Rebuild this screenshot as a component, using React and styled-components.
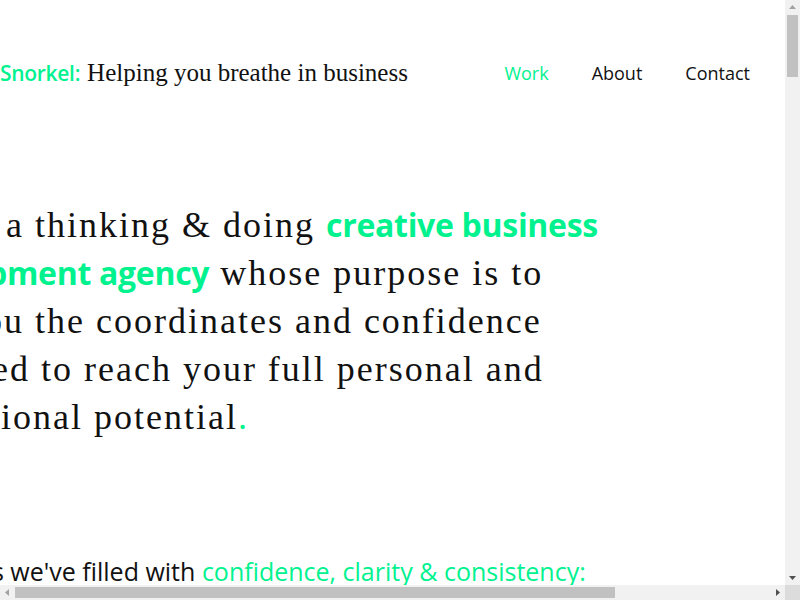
import React from "react";
import styled, { createGlobalStyle } from "styled-components";

const GREEN = "#00f28f";

const Global = createGlobalStyle`
  html, body { margin: 0; padding: 0; background: #fff; }
  body { color: #111; font-family: "Liberation Serif", serif; }
`;

const Page = styled.div`
  display: flex;
  justify-content: center;
  width: 100%;
  min-height: 5230px;
`;

const Column = styled.div`
  flex: 0 0 1206px;
  width: 1206px;
  display: flex;
  flex-direction: column;
`;

const Header = styled.header`
  height: 146px;
  display: flex;
  align-items: center;
  justify-content: space-between;
  padding: 0 35px 0 203px;
  box-sizing: border-box;
  width: 988px;
`;

const Brand = styled.div`
  display: flex;
  align-items: baseline;
  gap: 7px;
  white-space: nowrap;
`;

const BrandName = styled.span`
  font-family: "Open Sans", sans-serif;
  font-weight: 600;
  font-size: 21px;
  letter-spacing: -0.3px;
  color: ${GREEN};
`;

const Tagline = styled.span`
  font-family: "Liberation Serif", serif;
  font-size: 25px;
  color: #111;
`;

const Nav = styled.nav`
  display: flex;
  gap: 43px;
`;

const NavLink = styled.a`
  font-family: "Open Sans", sans-serif;
  font-size: 18px;
  text-decoration: none;
  color: ${(p) => (p.$active ? GREEN : "#111")};
`;

const Hero = styled.h1`
  margin: 55px 0 0 86px;
  font-family: "Liberation Serif", serif;
  font-weight: 400;
  font-size: 36px;
  line-height: 48px;
  letter-spacing: 2px;
  color: #111;
  white-space: nowrap;
`;

const Accent = styled.strong`
  font-family: "Open Sans", sans-serif;
  font-weight: 700;
  font-size: 32px;
  letter-spacing: -0.3px;
  color: ${GREEN};
`;

const Dot = styled.span`
  color: ${GREEN};
`;

const Intro = styled.p`
  margin: 114px 0 0 78px;
  font-family: "Open Sans", sans-serif;
  font-weight: 400;
  font-size: 25px;
  line-height: 32px;
  color: #111;
  white-space: nowrap;
`;

const IntroAccent = styled.span`
  color: ${GREEN};
`;

/* browser-style scrollbars drawn over the page, as in the reference */
const VScroll = styled.div`
  position: fixed;
  top: 0;
  right: 0;
  width: 15px;
  height: 585px;
  background: #f1f1f1;
`;

const VThumb = styled.div`
  position: absolute;
  left: 2px;
  top: 15px;
  width: 11px;
  height: 62px;
  background: #c1c1c1;
`;

const HScroll = styled.div`
  position: fixed;
  left: 0;
  bottom: 0;
  width: 785px;
  height: 15px;
  background: #f1f1f1;
`;

const HThumb = styled.div`
  position: absolute;
  top: 2px;
  left: 15px;
  width: 600px;
  height: 11px;
  background: #c1c1c1;
`;

const Corner = styled.div`
  position: fixed;
  right: 0;
  bottom: 0;
  width: 15px;
  height: 15px;
  background: #dcdcdc;
`;

const Arrow = styled.svg`
  position: absolute;
  width: 15px;
  height: 15px;
  ${(p) => p.$pos}
`;

export default function App() {
  return (
    <>
      <Global />
      <Page>
        <Column>
          <Header>
            <Brand>
              <BrandName>Snorkel:</BrandName>
              <Tagline>Helping you breathe in business</Tagline>
            </Brand>
            <Nav>
              <NavLink href="#" $active>Work</NavLink>
              <NavLink href="#">About</NavLink>
              <NavLink href="#">Contact</NavLink>
            </Nav>
          </Header>
          <Hero>
            We are a thinking &amp; doing <Accent>creative business</Accent>
            <br />
            <Accent>development agency</Accent> whose purpose is to
            <br />
            give you the coordinates and confidence
            <br />
            you need to reach your full personal and
            <br />
            professional potential<Dot>.</Dot>
          </Hero>
          <Intro>
            Businesses we've filled with{" "}
            <IntroAccent>confidence, clarity &amp; consistency:</IntroAccent>
          </Intro>
        </Column>
      </Page>
      <VScroll>
        <Arrow $pos="top:0;left:0;" viewBox="0 0 15 15">
          <path d="M4 9 L7.5 5 L11 9 Z" fill="#a3a3a3" />
        </Arrow>
        <VThumb />
        <Arrow $pos="bottom:0;left:0;" viewBox="0 0 15 15">
          <path d="M4 6 L7.5 10 L11 6 Z" fill="#505050" />
        </Arrow>
      </VScroll>
      <HScroll>
        <Arrow $pos="top:0;left:0;" viewBox="0 0 15 15">
          <path d="M9 4 L5 7.5 L9 11 Z" fill="#a3a3a3" />
        </Arrow>
        <HThumb />
        <Arrow $pos="top:0;right:0;" viewBox="0 0 15 15">
          <path d="M6 4 L10 7.5 L6 11 Z" fill="#505050" />
        </Arrow>
      </HScroll>
      <Corner />
    </>
  );
}
